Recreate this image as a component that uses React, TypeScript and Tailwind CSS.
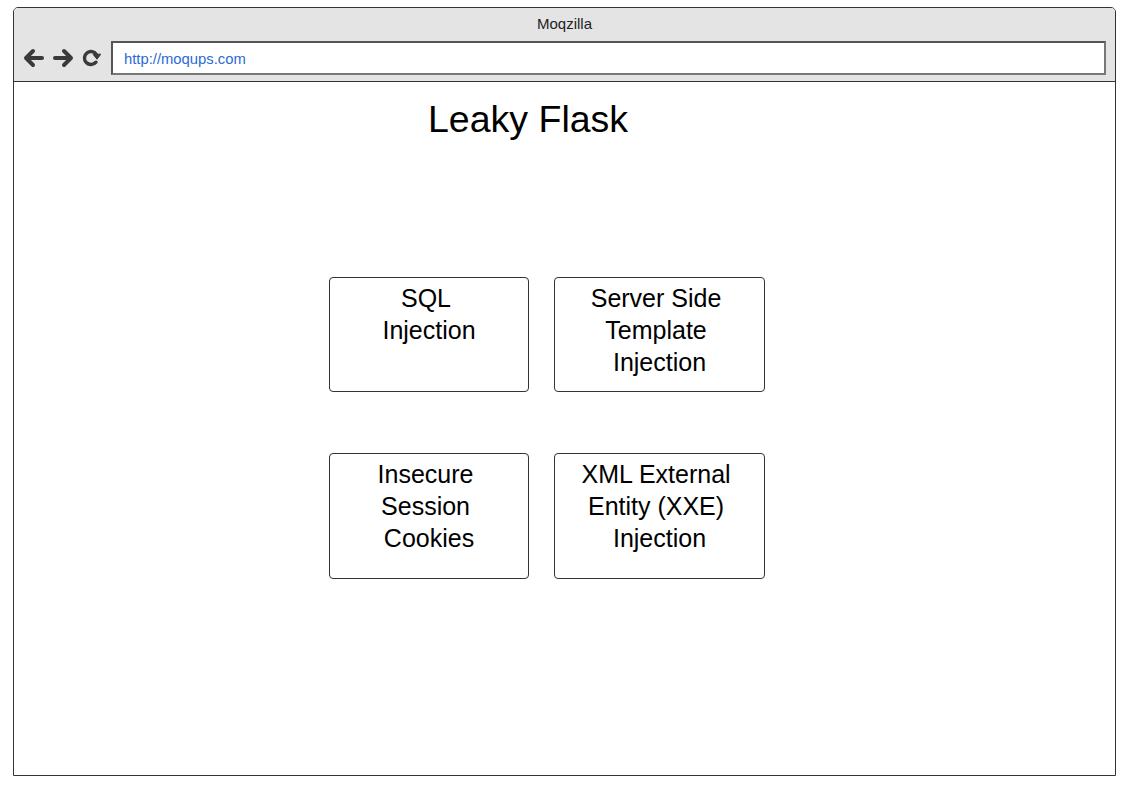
import React from "react";

function LeftArrow() {
  return (
    <svg width="22" height="20" viewBox="0 0 22 20">
      <g fill="none" stroke="#3a3a3a" strokeWidth="4" strokeLinecap="round" strokeLinejoin="round">
        <path d="M19 10 H4" />
        <path d="M10 3 L3 10 L10 17" />
      </g>
    </svg>
  );
}

function RightArrow() {
  return (
    <svg width="22" height="20" viewBox="0 0 22 20">
      <g fill="none" stroke="#3a3a3a" strokeWidth="4" strokeLinecap="round" strokeLinejoin="round">
        <path d="M3 10 H18" />
        <path d="M12 3 L19 10 L12 17" />
      </g>
    </svg>
  );
}

function Reload() {
  return (
    <svg width="20" height="20" viewBox="0 0 20 20">
      <path
        d="M14.98 14.18 A6.5 6.5 0 1 1 15.6 6.8"
        fill="none"
        stroke="#3a3a3a"
        strokeWidth="3.4"
        strokeLinecap="round"
      />
      <path d="M12 6.2 L19.8 6.2 L16 11.2 Z" fill="#3a3a3a" stroke="#3a3a3a" strokeWidth="1" strokeLinejoin="round" />
    </svg>
  );
}

function Box({ lines, w, h }: { lines: string[]; w: string; h: string }) {
  return (
    <div className={`${w} ${h} border border-[#333] rounded-[4px] pt-[4px] flex flex-col items-center`}>
      {lines.map((l, i) => (
        <div key={i} className="whitespace-pre text-[25px] leading-[32px] text-black">
          {l}
        </div>
      ))}
    </div>
  );
}

export default function App() {
  return (
    <div className="w-[1126px] h-[785px] bg-white pt-[7px] pl-[13px] font-['Liberation_Sans',Arial,sans-serif]">
      <div className="w-[1103px] h-[769px] border border-[#333] rounded-t-[5px] flex flex-col overflow-hidden">
        <div className="bg-[#e4e4e4] border-b border-[#333] pt-[8px] pb-[6px] flex flex-col">
          <div className="text-center text-[15px] leading-[16px] text-[#222]">Moqzilla</div>
          <div className="mt-[9px] flex items-center">
            <div className="w-[97px] flex items-center pl-[9px] gap-[7px]">
              <LeftArrow />
              <RightArrow />
              <Reload />
            </div>
            <div className="h-[34px] flex-1 mr-[9px] bg-white border-2 border-[#555] border-b-[#777] border-r-[#777] flex items-center pl-[11px] pt-[2px]">
              <span className="text-[14.8px] text-[#2a6bd6]">http://moqups.com</span>
            </div>
          </div>
        </div>
        <div className="flex-1 bg-white flex flex-col">
          <div className="pt-[17px] pl-[414px] text-[37.5px] leading-[41px] text-black">Leaky Flask</div>
          <div className="mt-[137px] pl-[315px] flex flex-col gap-[61px]">
            <div className="flex gap-[25px]">
              <Box lines={["SQL ", "Injection"]} w="w-[200px]" h="h-[115px]" />
              <Box lines={["Server Side ", "Template ", "Injection"]} w="w-[211px]" h="h-[115px]" />
            </div>
            <div className="flex gap-[25px]">
              <Box lines={["Insecure ", "Session ", "Cookies"]} w="w-[200px]" h="h-[126px]" />
              <Box lines={["XML External ", "Entity (XXE) ", "Injection"]} w="w-[211px]" h="h-[126px]" />
            </div>
          </div>
        </div>
      </div>
    </div>
  );
}
